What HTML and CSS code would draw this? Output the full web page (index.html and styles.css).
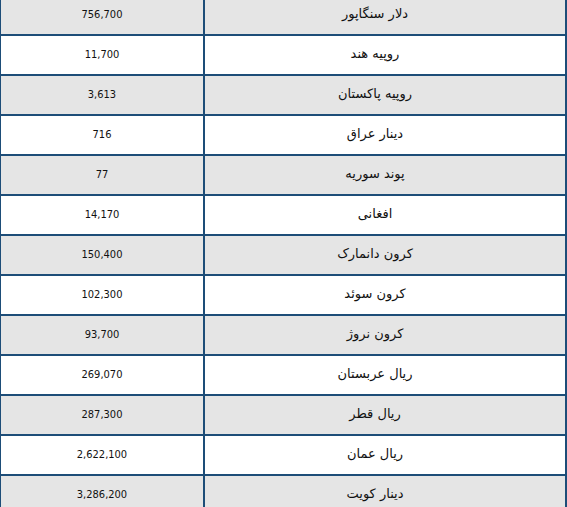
FILE: index.html
```html
<!DOCTYPE html>
<html lang="fa">
<head>
<meta charset="utf-8">
<title>نرخ ارز</title>
<link rel="stylesheet" href="styles.css">
</head>
<body>
<div class="rates">
  <div class="row alt"><div class="val">756,700</div><div class="name">دلار سنگاپور</div></div>
  <div class="row"><div class="val">11,700</div><div class="name">روپیه هند</div></div>
  <div class="row alt"><div class="val">3,613</div><div class="name">روپیه پاکستان</div></div>
  <div class="row"><div class="val">716</div><div class="name">دینار عراق</div></div>
  <div class="row alt"><div class="val">77</div><div class="name">پوند سوریه</div></div>
  <div class="row"><div class="val">14,170</div><div class="name">افغانی</div></div>
  <div class="row alt"><div class="val">150,400</div><div class="name">کرون دانمارک</div></div>
  <div class="row"><div class="val">102,300</div><div class="name">کرون سوئد</div></div>
  <div class="row alt"><div class="val">93,700</div><div class="name">کرون نروژ</div></div>
  <div class="row"><div class="val">269,070</div><div class="name">ریال عربستان</div></div>
  <div class="row alt"><div class="val">287,300</div><div class="name">ریال قطر</div></div>
  <div class="row"><div class="val">2,622,100</div><div class="name">ریال عمان</div></div>
  <div class="row alt"><div class="val">3,286,200</div><div class="name">دینار کویت</div></div>
</div>
</body>
</html>
```
FILE: styles.css
```css
html, body {
  margin: 0;
  padding: 0;
  overflow: hidden;
  background: #ffffff;
}
.rates {
  margin-top: -4px;
  width: 567px;
  box-sizing: border-box;
  border-left: 1px solid #1d4d78;
  border-right: 2px solid #1d4d78;
  font-family: "DejaVu Sans Condensed", "DejaVu Sans", sans-serif;
  font-size: 11px;
  color: #111111;
}
.row {
  display: grid;
  grid-template-columns: 204px 1fr;
  height: 38px;
  border-bottom: 2px solid #1d4d78;
  background: #ffffff;
}
.row.alt {
  background: #e5e5e5;
}
.val {
  display: flex;
  align-items: center;
  justify-content: center;
  border-right: 2px solid #1d4d78;
  padding-bottom: 1px;
}
.name {
  display: flex;
  align-items: center;
  justify-content: center;
  direction: rtl;
  padding-right: 20px;
  padding-bottom: 3px;
  font-family: "DejaVu Sans", sans-serif;
  font-size: 13px;
}
```
